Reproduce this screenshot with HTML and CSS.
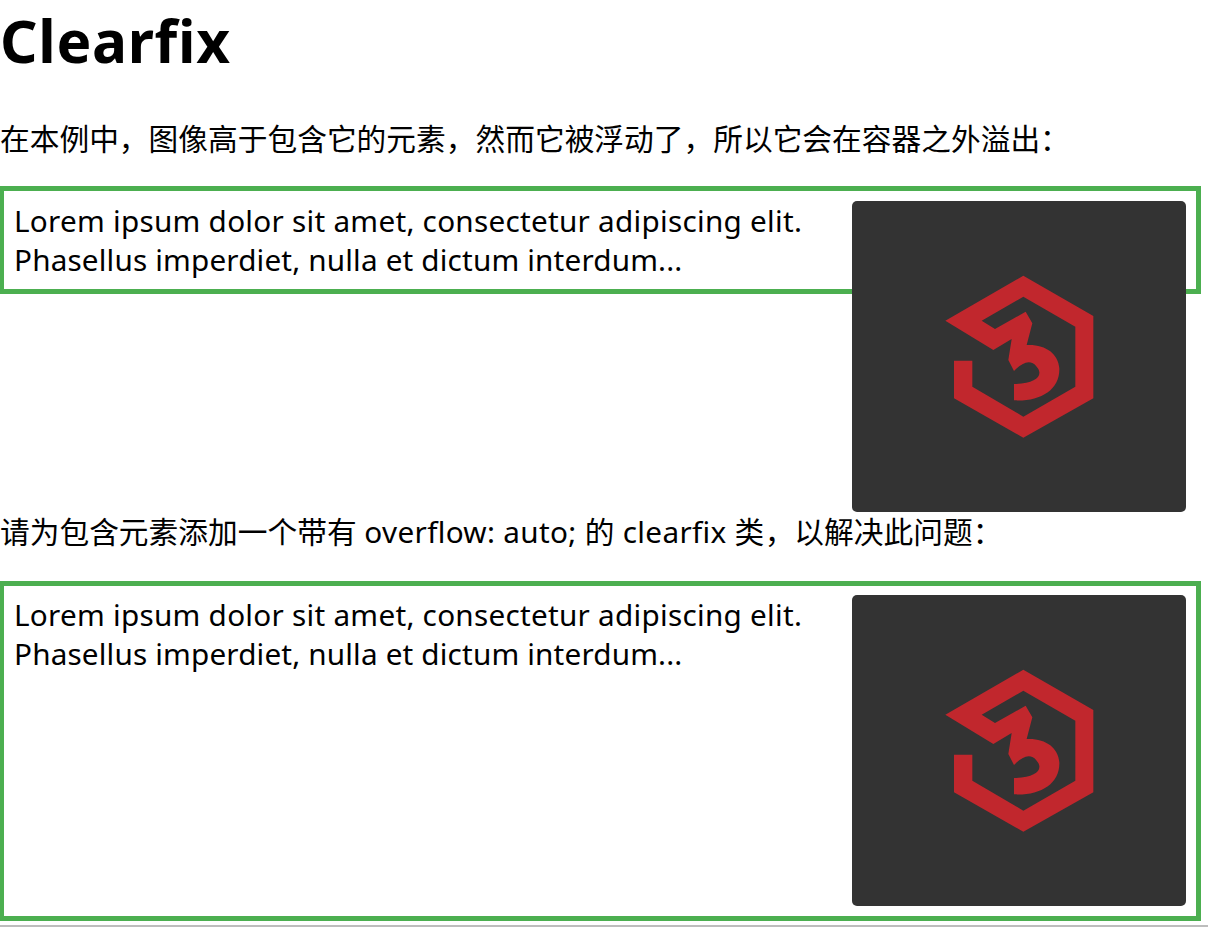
FILE: index.html
```html
<!DOCTYPE html>
<html lang="zh">

<head>
    <meta charset="UTF-8">
    <title>Clearfix</title>
    <link rel="stylesheet" href="styles.css">
</head>

<body>
    <h1>Clearfix</h1>

    <p>在本例中，图像高于包含它的元素，然而它被浮动了，所以它会在容器之外溢出：</p>

    <div class="box">
        <svg class="logo" viewBox="36 33 1002 933" role="img" aria-label="logo">
            <path class="mark" d="M460 480L515 447L505 510L522 543C545 520 570 505 590 530C612 555 590 582 522 582L522 631C600 635 660 600 658 535C655 490 615 462 560 465L577 400L557 365L465 417L425 392L550 320L706 410L706 590L550 680L397 590L397 512L342 512L342 625L550 743L760 625L760 378L550 257L316 392Z" />
        </svg>
        Lorem ipsum dolor sit amet, consectetur adipiscing elit. <span class="tail">Phasellus imperdiet, nulla et dictum interdum...</span>
    </div>

    <p class="after-float">请为包含元素添加一个带有 <span class="latin">overflow: auto; 的 clearfix 类</span>，以解决此问题：</p>

    <div class="box clearfix">
        <svg class="logo" viewBox="36 33 1002 933" role="img" aria-label="logo">
            <path class="mark" d="M460 480L515 447L505 510L522 543C545 520 570 505 590 530C612 555 590 582 522 582L522 631C600 635 660 600 658 535C655 490 615 462 560 465L577 400L557 365L465 417L425 392L550 320L706 410L706 590L550 680L397 590L397 512L342 512L342 625L550 743L760 625L760 378L550 257L316 392Z" />
        </svg>
        Lorem ipsum dolor sit amet, consectetur adipiscing elit. <span class="tail">Phasellus imperdiet, nulla et dictum interdum...</span>
    </div>
</body>

</html>
```

FILE: styles.css
```css
html {
    height: 100%;
}

body {
    box-sizing: border-box;
    min-height: 100%;
    margin: 0;
    padding-right: 7px;
    border-bottom: 2px solid #bdbdbd;
    font-family: "Noto Sans", "Noto Sans CJK SC", sans-serif;
    font-size: 29.7px;
    line-height: 39px;
    color: #000;
    overflow: hidden;
}

h1 {
    margin: 0;
    padding-bottom: 39px;
    font-size: 58.5px;
    line-height: 80px;
    font-weight: 700;
    letter-spacing: 0.7px;
}

p {
    margin: 0 0 28px;
    letter-spacing: 0.03px;
}

.after-float {
    clear: right;
    margin-bottom: 30px;
}

.latin {
    letter-spacing: 0.33px;
}

.box {
    padding: 10px;
    border: solid #4caf50;
    border-width: 5px 5px 5px 4px;
    letter-spacing: 0.27px;
}

.tail {
    letter-spacing: 0.17px;
}

.clearfix {
    padding-top: 9px;
    overflow: auto;
}

.logo {
    float: right;
    width: 334px;
    height: 311px;
    background: #333;
    border-radius: 5px;
}

.mark {
    fill: #c1272d;
}
```
